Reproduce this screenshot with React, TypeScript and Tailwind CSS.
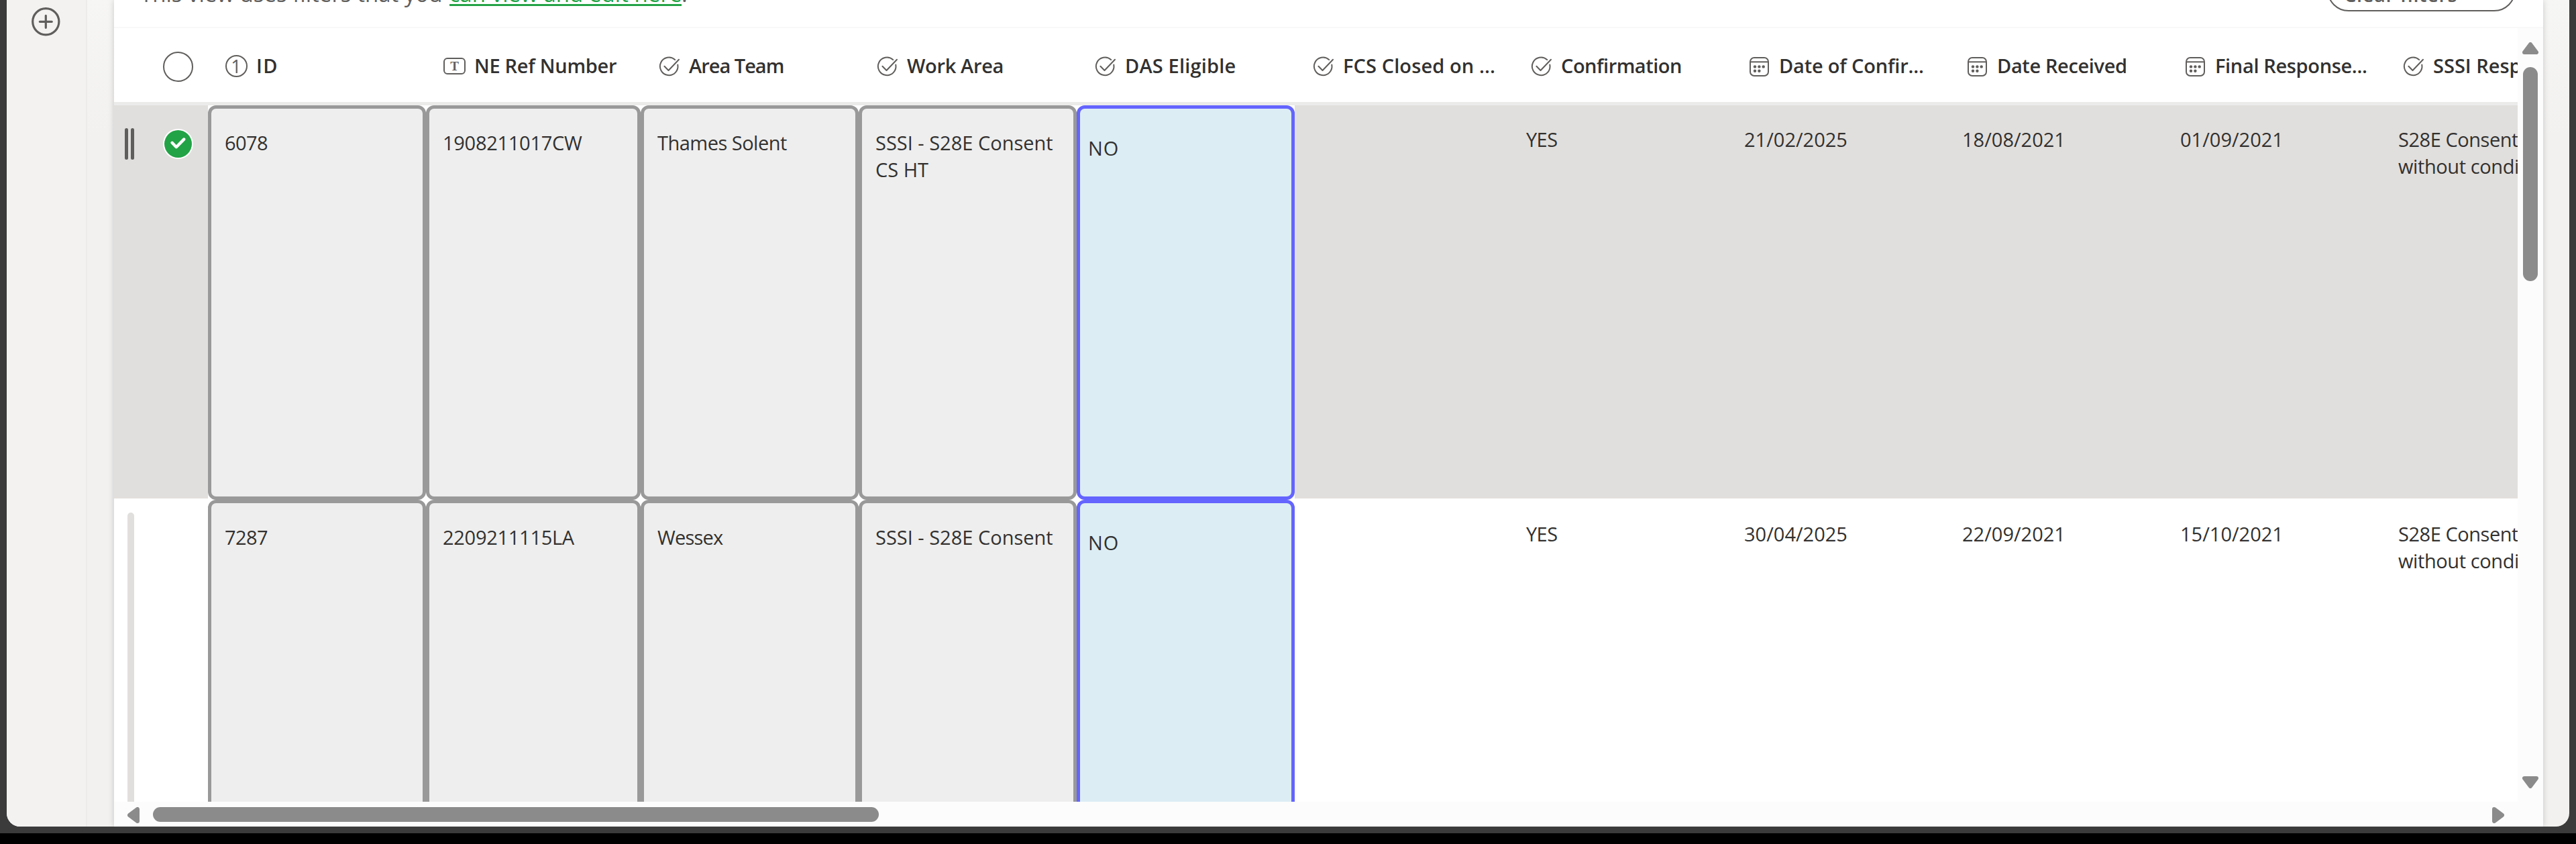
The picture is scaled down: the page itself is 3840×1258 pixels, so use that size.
import type { ReactNode } from 'react';
import clsx from 'clsx';

function NumberIcon() {
  return (
    <span className="flex size-[33px] shrink-0 items-center justify-center rounded-full border-2 border-[#605e5c] pr-px text-[27px] leading-[27px] font-normal text-[#605e5c]">
      1
    </span>
  );
}

function TextIcon() {
  return (
    <span className="mt-1 flex h-[25px] w-[33px] shrink-0 items-center justify-center rounded-md border-2 border-[#605e5c] font-['Liberation_Serif',serif] text-[19px] leading-[19px] font-semibold text-[#605e5c]">
      T
    </span>
  );
}

function ChoiceIcon() {
  return (
    <svg className="size-[34px] shrink-0" viewBox="0 0 34 34" fill="none" stroke="#605e5c" strokeWidth="2" strokeLinecap="round" strokeLinejoin="round">
      <path d="M25.2 7.1A13.3 13.3 0 1 0 29.3 14.6" />
      <path d="M9.4 16.8L15.5 23L31 6.7" />
    </svg>
  );
}

function CalendarIcon() {
  return (
    <svg className="size-[34px] shrink-0" viewBox="0 0 34 34" fill="none" stroke="#605e5c" strokeWidth="2">
      <rect x="3" y="4" width="27" height="27" rx="6" />
      <path d="M3 10.3H30" />
      <g fill="#605e5c" stroke="none">
        <circle cx="10" cy="17.4" r="2.2" />
        <circle cx="16.4" cy="17.4" r="2.2" />
        <circle cx="22.7" cy="17.4" r="2.2" />
        <circle cx="10" cy="23.7" r="2.2" />
        <circle cx="16.4" cy="23.7" r="2.2" />
      </g>
    </svg>
  );
}

type Column = { label: string; icon: ReactNode; width: string; tracking: string };

const columns: Column[] = [
  { label: 'ID', icon: <NumberIcon />, width: 'w-[325px]', tracking: 'tracking-[1.5px]' },
  { label: 'NE Ref Number', icon: <TextIcon />, width: 'w-[320px]', tracking: 'tracking-[-0.27px]' },
  { label: 'Area Team', icon: <ChoiceIcon />, width: 'w-[325px]', tracking: 'tracking-[-1px]' },
  { label: 'Work Area', icon: <ChoiceIcon />, width: 'w-[325px]', tracking: 'tracking-[-0.33px]' },
  { label: 'DAS Eligible', icon: <ChoiceIcon />, width: 'w-[325px]', tracking: 'tracking-[0.18px]' },
  { label: 'FCS Closed on ...', icon: <ChoiceIcon />, width: 'w-[325px]', tracking: 'tracking-[0.1px]' },
  { label: 'Confirmation', icon: <ChoiceIcon />, width: 'w-[325px]', tracking: 'tracking-[-0.49px]' },
  { label: 'Date of Confir...', icon: <CalendarIcon />, width: 'w-[325px]', tracking: 'tracking-[-0.19px]' },
  { label: 'Date Received', icon: <CalendarIcon />, width: 'w-[325px]', tracking: 'tracking-[-0.37px]' },
  { label: 'Final Response...', icon: <CalendarIcon />, width: 'w-[325px]', tracking: 'tracking-[-0.35px]' },
  { label: 'SSSI Response', icon: <ChoiceIcon />, width: 'w-[325px]', tracking: 'tracking-[0px]' },
];

type Row = {
  id: string;
  ref: string;
  team: string;
  teamTracking: string;
  area: string[];
  eligible: string;
  confirmed: string;
  dates: string[];
};

const rows: Row[] = [
  {
    id: '6078',
    ref: '1908211017CW',
    team: 'Thames Solent',
    teamTracking: 'tracking-[-0.51px]',
    area: ['SSSI - S28E Consent', 'CS HT'],
    eligible: 'NO',
    confirmed: 'YES',
    dates: ['21/02/2025', '18/08/2021', '01/09/2021'],
  },
  {
    id: '7287',
    ref: '2209211115LA',
    team: 'Wessex',
    teamTracking: 'tracking-[-0.8px]',
    area: ['SSSI - S28E Consent'],
    eligible: 'NO',
    confirmed: 'YES',
    dates: ['30/04/2025', '22/09/2021', '15/10/2021'],
  },
];

function LockedCell({ width, children }: { width: string; children: ReactNode }) {
  return (
    <div className={clsx('h-full shrink-0 rounded-[12px] border-5 border-[#999999] bg-[#eeeeee] pt-[31px] pl-5', width)}>
      {children}
    </div>
  );
}

function PlainCell({ shaded, children }: { shaded: boolean; children?: ReactNode }) {
  return (
    <div className={clsx('h-[586px] w-[325px] shrink-0 pt-[31px] pl-5 whitespace-nowrap', shaded && 'bg-[#e1dfdd]')}>
      {children}
    </div>
  );
}

function SelectedMark() {
  return (
    <svg className="mt-[34.5px] ml-[28px] size-[45px]" viewBox="0 0 45 45" fill="none">
      <circle cx="22.5" cy="22.5" r="22.5" fill="#ffffff" />
      <circle cx="22.5" cy="22.5" r="20.5" fill="#22a346" />
      <path d="M13.6 20.8L19.8 27.2L31.2 15.6" stroke="#ffffff" strokeWidth="4.4" strokeLinecap="round" strokeLinejoin="round" />
    </svg>
  );
}

function TableRow({ row, selected }: { row: Row; selected: boolean }) {
  return (
    <div className="flex h-[588px] shrink-0">
      <div className={clsx('flex h-[586px] w-[140px] shrink-0', selected && 'bg-[#e1dfdd]')}>
        {selected ? (
          <>
            <div className="mt-[34px] ml-4 flex h-[47px] w-[14px] gap-[3.5px]">
              <span className="w-[5px] rounded-sm bg-[#605e5c]" />
              <span className="w-[5px] rounded-sm bg-[#605e5c]" />
            </div>
            <div className="ml-[15px]">
              <SelectedMark />
            </div>
          </>
        ) : (
          <div className="mt-[19px] ml-5 w-2.5 rounded-full bg-[#e1dfdd]" />
        )}
      </div>
      <LockedCell width="w-[325px]">
        <span className="tracking-[-0.58px]">{row.id}</span>
      </LockedCell>
      <LockedCell width="w-[320px]">
        <span className="tracking-[-0.28px]">{row.ref}</span>
      </LockedCell>
      <LockedCell width="w-[325px]">
        <span className={row.teamTracking}>{row.team}</span>
      </LockedCell>
      <LockedCell width="w-[325px]">
        {row.area.map((line) => (
          <div key={line}>{line}</div>
        ))}
      </LockedCell>
      <div className="h-full w-[325px] shrink-0 rounded-[12px] border-5 border-[#6464ff] bg-[#dcedf4] pt-[39px] pl-3 tracking-[1px]">
        {row.eligible}
      </div>
      <PlainCell shaded={selected} />
      <PlainCell shaded={selected}>
        <span className="tracking-[-0.6px]">{row.confirmed}</span>
      </PlainCell>
      {row.dates.map((date) => (
        <PlainCell key={date} shaded={selected}>
          {date}
        </PlainCell>
      ))}
      <PlainCell shaded={selected}>
        <div className="tracking-[-0.46px]">S28E Consent</div>
        <div className="tracking-[-0.4px]">without conditions</div>
      </PlainCell>
    </div>
  );
}

function Arrow({ className }: { className: string }) {
  return (
    <svg className={clsx('shrink-0', className)} viewBox="0 0 24 18" fill="#8b8b8b" stroke="#8b8b8b" strokeWidth="6" strokeLinejoin="round">
      <path d="M3 15L12 3L21 15Z" />
    </svg>
  );
}

function Banner() {
  return (
    <div className="flex h-[42px] shrink-0 justify-between overflow-hidden border-b-2 border-[#f8f8f8] pr-[41px] pl-[39px] text-[#605e5c]">
      <p className="-mt-[31px] flex h-11 text-[33px] leading-[44px] whitespace-nowrap">
        <span className="w-[460.5px]">This view uses filters that you</span>
        <a className="h-[40px] w-[346.5px] border-b-3 border-[#22a346] tracking-[0.05px] text-[#22a346]">can view and edit here</a>
        <span>.</span>
      </p>
      <button className="-mt-[47px] flex h-16 w-[281px] items-start rounded-full border-2 border-[#605e5c] pt-[17px] pl-[23px] text-[29px] tracking-[0.6px] font-semibold whitespace-nowrap">
        Clear filters
      </button>
    </div>
  );
}

export default function App() {
  return (
    <div className="h-[1258px] w-[3840px] overflow-hidden bg-black font-['Open_Sans','Noto_Sans',sans-serif] text-[29px] leading-[40px] text-[#323130]">
      <div className="h-[1242px] bg-[#3b3b3b] px-2.5">
        <div className="flex h-[1232px] overflow-hidden rounded-b-[20px] bg-linear-to-b from-[#f6f6f4] to-[#f2f1f0] to-[200px]">
          <aside className="w-[120px] shrink-0 border-r-2 border-[#edebe9] bg-[#f3f2f1] pt-[10px] pl-[36px]">
            <svg className="size-[44px]" viewBox="0 0 44 44" fill="none" stroke="#605e5c" strokeWidth="3.2" strokeLinecap="round">
              <circle cx="22.3" cy="22.3" r="19.6" />
              <path d="M22.3 13.3V31.3M13.3 22.3H31.3" />
            </svg>
          </aside>

          <main className="ml-10 flex w-[3621px] shrink-0 flex-col bg-white shadow-[0_0_9px_rgba(0,0,0,0.18)]">
            <Banner />
            <div className="flex min-h-0 flex-1">
              <div className="flex min-w-0 flex-1 flex-col">
                <div className="flex h-[1153px] flex-col overflow-hidden">
                  <div className="flex h-[115px] shrink-0 border-b-5 border-[#ebebea]">
                    <div className="w-[140px] shrink-0 pt-[35px] pl-[73px]">
                      <div className="size-[45px] rounded-full border-2 border-[#605e5c]" />
                    </div>
                    {columns.map((column) => (
                      <div key={column.label} className={clsx('flex shrink-0 items-start pt-[36px] pl-[26px] font-semibold whitespace-nowrap', column.width)}>
                        <span className="mt-[4px] flex h-[34px] w-[46px] shrink-0">{column.icon}</span>
                        <span className={column.tracking}>{column.label}</span>
                      </div>
                    ))}
                  </div>
                  {rows.map((row, index) => (
                    <TableRow key={row.id} row={row} selected={index === 0} />
                  ))}
                </div>
                <div className="flex h-[37px] shrink-0 items-start bg-[#fcfcfc] pt-2 pl-5">
                  <Arrow className="mt-[3px] -ml-[3px] h-[18px] w-6 -rotate-90" />
                  <div className="ml-[17px] h-[22px] w-[1082px] rounded-full bg-[#8b8b8b]" />
                  <Arrow className="mt-[3px] mr-[17px] ml-auto h-[18px] w-6 rotate-90" />
                </div>
              </div>
              <div className="flex w-[38px] shrink-0 flex-col items-center bg-[#fcfcfc] pt-[20.5px]">
                <Arrow className="h-[18px] w-6" />
                <div className="mt-[19.5px] h-[319px] w-[22px] rounded-full bg-[#8b8b8b]" />
                <Arrow className="mt-auto mb-[57px] h-[18px] w-6 rotate-180" />
              </div>
            </div>
          </main>
        </div>
      </div>
    </div>
  );
}
